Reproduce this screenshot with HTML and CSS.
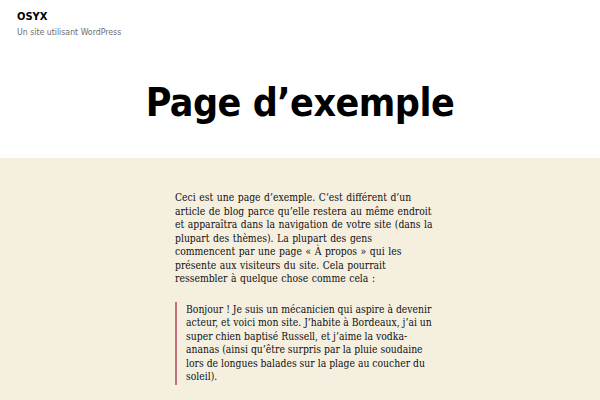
FILE: index.html
```html
<!DOCTYPE html>
<html lang="fr">
<head>
<meta charset="utf-8">
<link rel="stylesheet" href="styles.css">
</head>
<body>
<header class="site-header">
  <div class="site-title">OSYX</div>
  <div class="site-desc">Un site utilisant WordPress</div>
</header>
<div class="entry-header">
  <h1 class="entry-title">Page d’exemple</h1>
</div>
<main class="entry-content">
  <div class="inner">
    <p class="lead">Ceci est une page d’exemple. C’est différent d’un article de blog parce qu’elle restera au même endroit et apparaîtra dans la navigation de votre site (dans la plupart des thèmes). La plupart des gens commencent par une page « À propos » qui les présente aux visiteurs du site. Cela pourrait ressembler à quelque chose comme cela :</p>
    <blockquote><p>Bonjour ! Je suis un mécanicien qui aspire à devenir acteur, et voici mon site. J’habite à Bordeaux, j’ai un super chien baptisé Russell, et j’aime la vodka-ananas (ainsi qu’être surpris par la pluie soudaine lors de longues balades sur la plage au coucher du soleil).</p></blockquote>
  </div>
</main>
</body>
</html>
```
FILE: styles.css
```css
html, body { margin: 0; padding: 0; }
body { background: #fff; color: #000; font-family: "DejaVu Sans", sans-serif; font-stretch: condensed; overflow: hidden; }
.site-header { padding: 10px 17px 0; }
.site-title { font-weight: bold; font-size: 11px; line-height: 14px; }
.site-desc { font-size: 8.7px; color: #6d6d6d; margin-top: 2px; line-height: 12px; }
.entry-header { text-align: center; padding: 41px 0 31px; }
.entry-title { margin: 0; font-size: 39px; line-height: 48px; font-weight: bold; letter-spacing: -0.5px; }
.entry-content { background: #f5efe0; padding-top: 33px; box-sizing: border-box; min-height: 242px; }
.inner { width: 258px; margin-left: 175px; font-family: "DejaVu Serif", serif; font-stretch: condensed; font-size: 10.3px; line-height: 13.5px; color: #111; }
.inner p { margin: 0; }
.lead { word-spacing: 0.6px; }
blockquote { margin: 16px 0 0; border-left: 2px solid #c6707b; padding: 1px 0 1px 9px; width: 251px; }
```
